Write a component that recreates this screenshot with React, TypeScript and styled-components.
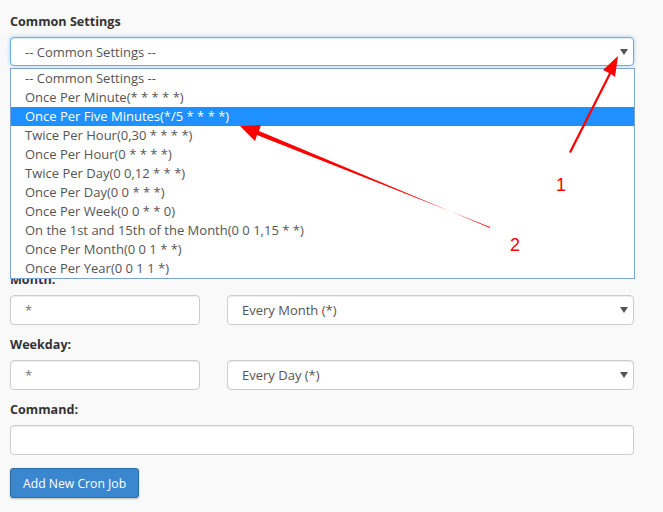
import { createGlobalStyle, styled } from 'styled-components';

const GlobalStyle = createGlobalStyle`
  html, body {
    margin: 0;
    padding: 0;
    background: #f9f9f9;
  }
  body {
    font-family: 'Open Sans', 'Liberation Sans', sans-serif;
    font-size: 13px;
    color: #555;
  }
`;

const OPTIONS = [
  '-- Common Settings --',
  'Once Per Minute(* * * * *)',
  'Once Per Five Minutes(*/5 * * * *)',
  'Twice Per Hour(0,30 * * * *)',
  'Once Per Hour(0 * * * *)',
  'Twice Per Day(0 0,12 * * *)',
  'Once Per Day(0 0 * * *)',
  'Once Per Week(0 0 * * 0)',
  'On the 1st and 15th of the Month(0 0 1,15 * *)',
  'Once Per Month(0 0 1 * *)',
  'Once Per Year(0 0 1 1 *)',
];

// minute/hour/day rows sit under the open list, so they keep their space but aren't shown
const FIELDS = [
  { label: 'Minute:', choice: 'Every Minute (*)', covered: true },
  { label: 'Hour:', choice: 'Every Hour (*)', covered: true },
  { label: 'Day:', choice: 'Every Day (*)', covered: true },
  { label: 'Month:', choice: 'Every Month (*)', covered: false },
  { label: 'Weekday:', choice: 'Every Day (*)', covered: false },
];

const Arrow = () => (
  <svg width="8" height="6" viewBox="0 0 8 6">
    <path d="M0 0 L8 0 L4 6 Z" fill="#555" />
  </svg>
);

const App = () => {
  return (
    <>
      <GlobalStyle />
      <Page>
        <Group $tight>
          <Label>Common Settings</Label>
          <SelectWrap>
            <SelectBox $focused>
              <span>-- Common Settings --</span>
              <Arrow />
            </SelectBox>
            <DropList>
              {OPTIONS.map((o, i) => (
                <Option key={o} $active={i === 2}>{o}</Option>
              ))}
            </DropList>
          </SelectWrap>
        </Group>

        {FIELDS.map((f) => (
          <Group key={f.label} $covered={f.covered}>
            <Label>{f.label}</Label>
            <Row>
              <TextInput>*</TextInput>
              <SelectBox>
                <span>{f.choice}</span>
                <Arrow />
              </SelectBox>
            </Row>
          </Group>
        ))}

        <Group>
          <Label>Command:</Label>
          <TextInput />
        </Group>

        <Button>Add New Cron Job</Button>

        <Annotations width="663" height="512" viewBox="0 0 663 512">
          <path d="M569 152 L609 73 L603 70 L618 56 L615 77 L611 74 L571 153 Z" fill="#ff0000" />
          <path d="M490 227 L257 135 L255 141 L240 126 L261 125 L259 131 L490 228 Z" fill="#ff0000" />
          <AnnoText x="556" y="191">1</AnnoText>
          <AnnoText x="510" y="251">2</AnnoText>
        </Annotations>
      </Page>
    </>
  );
};

export default App;

const Page = styled.div`
  position: relative;
  width: 624px;
  padding: 12px 0 0 10px;
  height: 500px;
`;

const Group = styled.div<{ $tight?: boolean; $covered?: boolean }>`
  margin-bottom: ${(p) => (p.$tight ? '9px' : '10px')};
  visibility: ${(p) => (p.$covered ? 'hidden' : 'visible')};
`;

const Label = styled.label`
  display: block;
  font-weight: 700;
  font-size: 12.6px;
  line-height: 20px;
  color: #333;
  margin-bottom: 5px;
`;

const SelectWrap = styled.div`
  position: relative;
`;

const SelectBox = styled.div<{ $focused?: boolean }>`
  box-sizing: border-box;
  height: ${(p) => (p.$focused ? '29px' : '30px')};
  display: flex;
  align-items: center;
  justify-content: space-between;
  padding: 0 5px 0 14px;
  background: #fff;
  border: 1px solid ${(p) => (p.$focused ? '#66afe9' : '#ccc')};
  border-radius: 4px;
  box-shadow: ${(p) =>
    p.$focused
      ? 'inset 0 1px 1px rgba(0,0,0,.075), 0 0 4px rgba(102,175,233,.6)'
      : 'inset 0 1px 1px rgba(0,0,0,.075)'};
  color: #555;
  font-size: 13px;
`;

const DropList = styled.div`
  position: absolute;
  top: 31px;
  left: 0;
  width: 625px;
  box-sizing: border-box;
  background: #fff;
  border: 1px solid #7ea1d6;
  z-index: 2;
`;

const Option = styled.div<{ $active?: boolean }>`
  height: 19px;
  line-height: 19px;
  padding-left: 14px;
  font-size: 13px;
  color: ${(p) => (p.$active ? '#fff' : '#555')};
  background: ${(p) => (p.$active ? '#1e90ff' : 'transparent')};
`;

const Row = styled.div`
  display: grid;
  grid-template-columns: 190px 1fr;
  gap: 27px;
`;

const TextInput = styled.div`
  box-sizing: border-box;
  height: 30px;
  display: flex;
  align-items: center;
  padding: 0 14px;
  background: #fff;
  border: 1px solid #ccc;
  border-radius: 4px;
  box-shadow: inset 0 1px 1px rgba(0,0,0,.075);
  color: #777;
  font-size: 13px;
`;

const Button = styled.button`
  margin-top: 3px;
  height: 30px;
  padding: 0 12px;
  font-family: 'Open Sans', 'Liberation Sans', sans-serif;
  font-size: 12.2px;
  color: #fff;
  background: #3a87d0;
  border: 1px solid #2e6da8;
  border-radius: 3px;
  box-shadow: 0 1px 2px rgba(0,0,0,.25);
`;

const Annotations = styled.svg`
  position: absolute;
  left: 0;
  top: 0;
  z-index: 3;
  pointer-events: none;
`;

const AnnoText = styled.text`
  font-family: 'Liberation Sans', Arial, sans-serif;
  font-size: 18px;
  fill: #ff0000;
`;
